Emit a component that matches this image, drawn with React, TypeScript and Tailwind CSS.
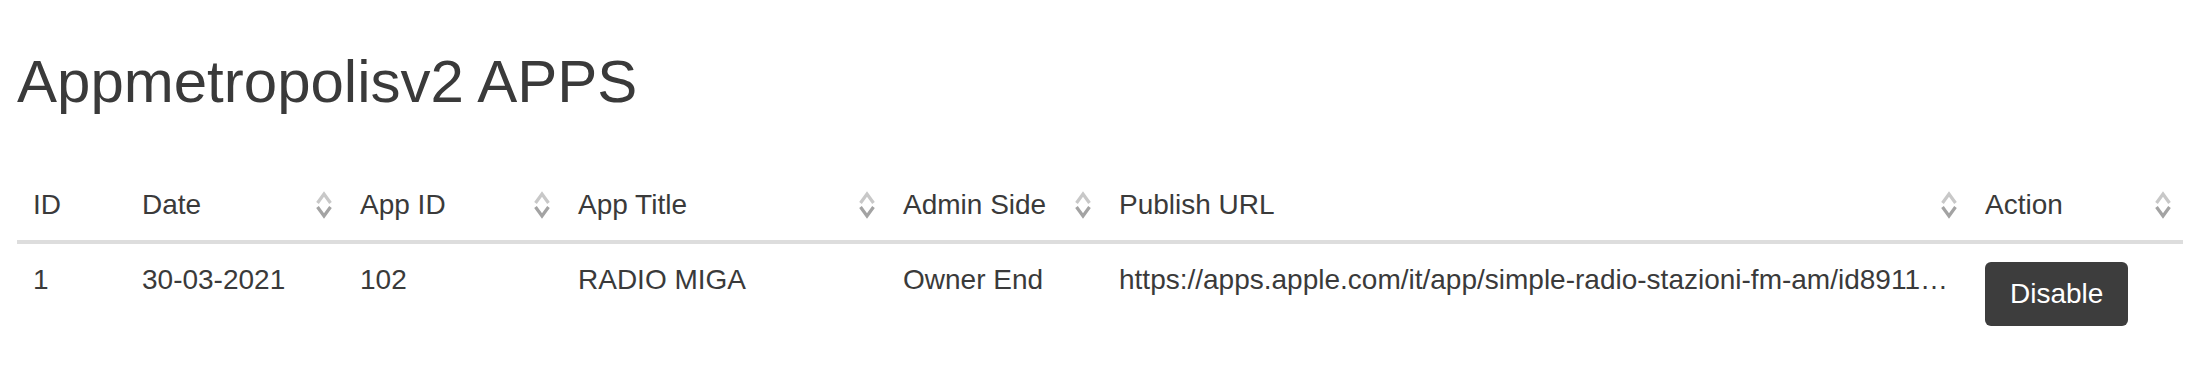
import React from 'react';

const columns = [
  { label: 'ID', width: 'w-[109px]', sortable: false },
  { label: 'Date', width: 'w-[218px]', sortable: true },
  { label: 'App ID', width: 'w-[218px]', sortable: true },
  { label: 'App Title', width: 'w-[325px]', sortable: true },
  { label: 'Admin Side', width: 'w-[216px]', sortable: true },
  { label: 'Publish URL', width: 'w-[866px]', sortable: true },
  { label: 'Action', width: 'w-[214px]', sortable: true },
];

const rows = [
  {
    id: '1',
    date: '30-03-2021',
    appId: '102',
    title: 'RADIO MIGA',
    admin: 'Owner End',
    url: 'https://apps.apple.com/it/app/simple-radio-stazioni-fm-am/id891132290',
  },
];

const SortIcon = () => (
  <svg width="18" height="32" viewBox="0 0 18 32" fill="none" className="shrink-0 blur-[0.7px]">
    <path d="M2.5 14 L9 5 L15.5 14" stroke="#c8c8c8" strokeWidth="3.2" />
    <path d="M2.5 18 L9 27 L15.5 18" stroke="#a3a3a3" strokeWidth="3.2" />
  </svg>
);

export default function App() {
  return (
    <div className="min-h-screen bg-white px-[17px] text-[#3a3a3a] font-['Liberation_Sans',Arial,sans-serif]">
      <h1 className="pt-[46px] text-[60px] leading-[72px] font-normal">Appmetropolisv2 APPS</h1>
      <table className="mt-[50px] w-[2166px] table-fixed border-collapse text-[28px] leading-[40px]">
        <colgroup>
          {columns.map((c) => (
            <col key={c.label} className={c.width} />
          ))}
        </colgroup>
        <thead>
          <tr className="border-b-4 border-[#dddddd]">
            {columns.map((c) => (
              <th key={c.label} className="pt-[17px] pb-[15px] pl-4 pr-[11px] text-left font-normal">
                <div className="flex items-center justify-between">
                  <span>{c.label}</span>
                  {c.sortable && <SortIcon />}
                </div>
              </th>
            ))}
          </tr>
        </thead>
        <tbody>
          {rows.map((r) => (
            <tr key={r.id}>
              <td className="p-4 align-top">{r.id}</td>
              <td className="p-4 align-top">{r.date}</td>
              <td className="p-4 align-top">{r.appId}</td>
              <td className="p-4 align-top">{r.title}</td>
              <td className="p-4 align-top">{r.admin}</td>
              <td className="p-4 align-top">
                <div className="truncate">{r.url}</div>
              </td>
              <td className="px-4 pt-[18px] pb-4 align-top">
                <button className="h-16 rounded-[6px] bg-[#3d3d3d] px-[25px] text-[28px] text-white">Disable</button>
              </td>
            </tr>
          ))}
        </tbody>
      </table>
    </div>
  );
}
